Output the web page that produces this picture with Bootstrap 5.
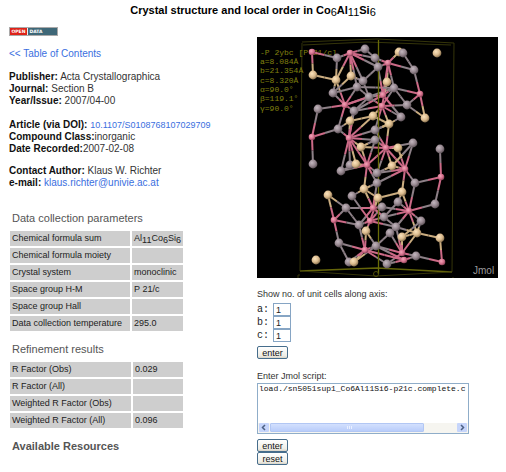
<!DOCTYPE html>
<html lang="en">
<head>
<meta charset="utf-8">
<meta name="viewport" content="width=device-width, initial-scale=1">
<title>Crystal structure and local order in Co6Al11Si6</title>
<link href="https://cdn.jsdelivr.net/npm/bootstrap@5.3.0/dist/css/bootstrap.min.css" rel="stylesheet">
<style>
body { font-family: "Liberation Sans", Arial, sans-serif; font-size: 10px; line-height: 12px; color: #333; background: #fff; }
.page { padding: 3px 8px 4px; }
.page-title { font-size: 11px; line-height: 14px; font-weight: 700; color: #000; margin: 0 0 10px; }
sub { font-size: 9px; bottom: 0; top: 2px; line-height: 0; }
.page-title sub { font-size: 11px; font-weight: 400; }
a { color: #3a6fe0; text-decoration: none; }
.info { padding-left: 1px; }
.meta p { margin: 0 0 12px; }
.meta p.dates { margin-bottom: 10px; }
.meta p.last { margin-bottom: 0; }
.meta strong { color: #111; }
.doi { font-size: 9px; }
.open-badge { display: block; }
.toc { margin: 12px 0 11px; }
.section-title { font-size: 11px; line-height: 14px; font-weight: 400; color: #555; margin: 9px 0 4px 3px; }
.section-title.first { margin-top: 22px; }
.props { border-collapse: separate; border-spacing: 2px; margin: 0 0 0 -1px; width: 177px; font-size: 9px; }
.props th, .props td { background: #cecece; height: 15px; line-height: 15px; padding: 0 2px; font-weight: 400; color: #222; white-space: nowrap; }
.props th { width: 121px; }
.model { padding: 10px 0 0 4px; }
.viewer { display: block; width: 100%; height: auto; background: #000; }
.field-label { display: block; font-size: 9px; line-height: 14px; color: #333; margin-top: 9px; }
.script-label { margin-top: 10px; }
.axis { margin: 2px 0 4px; }
.axis label { font: 10px/13px "Liberation Mono", monospace; color: #222; width: 16px; }
.axis input { width: 18px; height: 13px; padding: 0 2px; border: 1px solid #86a5c4; border-radius: 0; font-size: 9px; line-height: 11px; color: #222; }
.xp-btn { display: block; width: 31px; height: 13px; padding: 0; font-size: 9px; line-height: 10px; color: #111; border: 1px solid #466d8c; border-radius: 2px; background: linear-gradient(#fff, #eeede6 80%, #d8d3c7); }
.script-box { width: 88%; border: 1px solid #8fadc9; margin-bottom: 5px; }
.script-box textarea { display: block; width: 100%; height: 39px; padding: 0 1px; border: 0; border-radius: 0; resize: none; overflow: hidden; white-space: pre; font: 8px/10px "Liberation Mono", monospace; color: #111; background: #fff; }
.hbar { height: 10px; background: #f6f5f0; padding: 0 1px; }
.hbar .arrow { width: 10px; height: 9px; background: #c6d5fb; border-radius: 1px; }
.hbar .track { padding: 0 1px; }
.hbar .thumb { width: 83%; height: 9px; background: linear-gradient(#d3e0fe, #b9cdfa); border: 1px solid #b2c7f4; border-radius: 1px; }
.hbar svg { display: block; }
</style>
<script src="https://cdn.jsdelivr.net/npm/bootstrap@5.3.0/dist/js/bootstrap.bundle.min.js"></script>
</head>
<body>
<main class="page container-fluid">
  <h1 class="page-title text-center">Crystal structure and local order in Co<sub>6</sub>Al<sub>11</sub>Si<sub>6</sub></h1>
  <div class="row g-0">
    <section class="col-6 info">
      <svg class="open-badge" width="49" height="9" viewBox="0 0 49 9" role="img" aria-label="Open data">
        <rect width="49" height="9" fill="#aaa9a9"/>
        <rect x="1" y="1" width="47" height="7" fill="#eee"/>
        <rect x="1" y="1" width="17" height="7" fill="#dd2319"/>
        <rect x="19" y="1" width="29" height="7" fill="#3f6878"/>
        <text x="2.500" y="6" font-size="4.500" font-weight="700" fill="#fff" font-family="DejaVu Sans, sans-serif">OPEN</text>
        <text x="20.500" y="6" font-size="4.500" font-weight="700" fill="#fff" font-family="DejaVu Sans, sans-serif">DATA</text>
      </svg>
      <div class="toc"><a href="#">&lt;&lt; Table of Contents</a></div>
      <div class="meta">
        <p><strong>Publisher:</strong> Acta Crystallographica<br><strong>Journal:</strong> Section B<br><strong>Year/Issue:</strong> 2007/04-00</p>
        <p class="dates"><strong>Article (via DOI):</strong> <a class="doi" href="#">10.1107/S0108768107029709</a><br><strong>Compound Class:</strong>inorganic<br><strong>Date Recorded:</strong>2007-02-08</p>
        <p class="last"><strong>Contact Author:</strong> Klaus W. Richter<br><strong>e-mail:</strong> <a href="#">klaus.richter@univie.ac.at</a></p>
      </div>
      <h2 class="section-title first">Data collection parameters</h2>
      <table class="props">
        <tr><th scope="row">Chemical formula sum</th><td>Al<sub>11</sub>Co<sub>6</sub>Si<sub>6</sub></td></tr>
        <tr><th scope="row">Chemical formula moiety</th><td></td></tr>
        <tr><th scope="row">Crystal system</th><td>monoclinic</td></tr>
        <tr><th scope="row">Space group H-M</th><td>P 21/c</td></tr>
        <tr><th scope="row">Space group Hall</th><td></td></tr>
        <tr><th scope="row">Data collection temperature</th><td>295.0</td></tr>
      </table>
      <h2 class="section-title">Refinement results</h2>
      <table class="props">
        <tr><th scope="row">R Factor (Obs)</th><td>0.029</td></tr>
        <tr><th scope="row">R Factor (All)</th><td></td></tr>
        <tr><th scope="row">Weighted R Factor (Obs)</th><td></td></tr>
        <tr><th scope="row">Weighted R Factor (All)</th><td>0.096</td></tr>
      </table>
      <h2 class="section-title mb-0 fw-bold">Available Resources</h2>
    </section>
    <section class="col-6 model">
      <svg class="viewer" id="viewer" viewBox="0 0 241 241" role="img" aria-label="Jmol model of the unit cell">
        <defs>
          <radialGradient id="gG" cx=".38" cy=".35" r=".65"><stop offset="0" stop-color="#c3b7bf"/><stop offset=".6" stop-color="#95868e"/><stop offset="1" stop-color="#5f545a"/></radialGradient>
          <radialGradient id="gP" cx=".38" cy=".35" r=".65"><stop offset="0" stop-color="#f3a5b9"/><stop offset=".6" stop-color="#d4708c"/><stop offset="1" stop-color="#8c4459"/></radialGradient>
          <radialGradient id="gT" cx=".38" cy=".35" r=".65"><stop offset="0" stop-color="#fbe3bd"/><stop offset=".6" stop-color="#d9b98c"/><stop offset="1" stop-color="#8a7250"/></radialGradient>
        </defs>
        <g fill="none" stroke="#35350a" stroke-width="1"><path d="M45 5L120 2L197 6M45 6L44 105L43 234M197 6L196 120L195 235M46 8L110 5L194 8M41 241V238H43M196 241V240"/></g>
        <path d="M43 234L120 231L195 235" fill="none" stroke="#646409" stroke-width="1.5"/>
        <path d="M43 234L119 239L195 235" fill="none" stroke="#35350a"/>
        <g font-family="Liberation Mono, monospace" font-size="8" fill="#80800f">
          <text x="3" y="18">-P 2ybc [P 21/c]</text><text x="3" y="27">a=8.084Å</text><text x="3" y="36">b=21.354Å</text><text x="3" y="46">c=8.320Å</text><text x="3" y="55">α=90.0°</text><text x="3" y="64">β=119.1°</text><text x="3" y="74">γ=90.0°</text>
        </g>
        <g id="bonds"></g>
        <path d="M121.500 3V237" stroke="#696b07" stroke-width="1.300"/>
        <circle cx="119" cy="237" r="2.500" fill="none" stroke="#4e4e08"/>
        <g id="atoms"></g>
        <text x="216" y="237" font-family="Liberation Sans, sans-serif" font-size="10" fill="#9a9a9a">Jmol</text>
      </svg>
      <div class="field-label">Show no. of unit cells along axis:</div>
      <div class="axis">
        <div class="d-flex"><label for="ax">a:</label><input id="ax" type="text" value="1"></div>
        <div class="d-flex"><label for="bx">b:</label><input id="bx" type="text" value="1"></div>
        <div class="d-flex"><label for="cx">c:</label><input id="cx" type="text" value="1"></div>
      </div>
      <button class="xp-btn" type="button">enter</button>
      <label class="field-label script-label" for="script">Enter Jmol script:</label>
      <div class="script-box">
        <textarea id="script" wrap="off" spellcheck="false">load./sn5051sup1_Co6Al11Si6-p21c.complete.c</textarea>
        <div class="hbar d-flex">
          <div class="arrow"><svg width="10" height="9"><path d="M6 2L3.500 4.500L6 7" fill="none" stroke="#4d6185" stroke-width="1.500"/></svg></div>
          <div class="track flex-grow-1"><div class="thumb"><svg width="100%" height="7"><path d="M0 3.500H6" transform="translate(76 0)" stroke="#e9f0ff" stroke-width="3" stroke-dasharray="1 1"/></svg></div></div>
          <div class="arrow"><svg width="10" height="9"><path d="M4 2L6.500 4.500L4 7" fill="none" stroke="#4d6185" stroke-width="1.500"/></svg></div>
        </div>
      </div>
      <button class="xp-btn" type="button">enter</button>
      <button class="xp-btn" type="button">reset</button>
    </section>
  </div>
</main>
<script>
// Atoms: kind (G aluminium, P cobalt, T silicon), x, y
const atoms = {
  a:['P',55,15], b:['G',80,21], c:['P',93,16], d:['G',108,12], e:['G',118,21], f:['T',56,38], g:['T',79,43], h:['T',94,39],
  i:['G',106,44], j:['G',100,50], k:['G',76,56], l:['G',112,60], m:['P',88,68], n:['G',97,74], o:['G',61,72], p:['T',93,84],
  q:['T',116,79], r:['G',81,92], s:['P',55,100], t:['P',92,101], u:['T',104,110], v:['G',118,93], w:['G',118,103], x:['G',121,30],
  A:['T',142,15], B:['G',146,16], C:['P',131,26], D:['G',157,33], E:['T',180,16], F:['T',130,45], H:['G',137,51], I:['P',163,57],
  J:['P',126,58], K:['G',150,68], L:['P',125,69], M:['G',144,80], N:['T',168,81], O:['T',132,87], Q:['G',156,106], R:['P',129,111],
  S:['T',141,111], U:['G',183,112], V:['G',56,127], W:['G',84,134], X:['G',93,128], Y:['T',99,127], Z:['P',110,128],
  a1:['G',120,136], b1:['G',120,146], c1:['T',107,152], d1:['T',71,158], e1:['G',95,159], f1:['T',121,161], g1:['G',89,171],
  h1:['P',116,171], i1:['P',77,183], j1:['P',113,184], k1:['G',102,188], l1:['T',109,194], m1:['G',82,206], n1:['T',59,223],
  o1:['G',92,225], p1:['T',97,225], q1:['P',108,213], r1:['G',119,209], s1:['P',184,140], t1:['T',135,129], u1:['P',148,132],
  v1:['G',158,146], w1:['T',145,155], x1:['G',141,165], y1:['G',178,167], z1:['P',152,174], A1:['G',125,170], B1:['G',127,180],
  C1:['G',164,184], D1:['G',139,190], E1:['G',133,196], F1:['T',145,200], G1:['T',160,196], H1:['T',183,201], I1:['P',145,216],
  J1:['P',147,223], K1:['G',159,219], L1:['P',185,225], M1:['G',130,227]
};
const bonds = `a-b a-f b-c c-d c-e c-h c-i c-x d-e e-x f-g b-g g-c g-k g-m h-k h-i i-l i-x j-m j-l j-c k-m k-j m-n m-l m-r n-l n-p n-t n-J m-H
 o-m o-s s-r s-V r-t r-p p-t p-q q-L l-J l-L n-L t-v t-w t-u t-W t-X t-q t-n u-Z u-w v-O w-R v-R e-C A-C A-B B-D C-D C-F C-x C-H C-J D-I H-I K-I I-N
 K-N K-L K-H F-L F-J H-L H-J H-j L-M L-O L-v J-M x-J O-M O-R O-v O-q R-S R-Q R-w R-t1 R-a1 R-Z R-u1 R-u Q-u1 S-u1 Q-t1 U-s1
 Z-W Z-X Z-Y Z-a1 Z-b1 Z-c1 Z-w t-Z t-Y W-Y u1-t1 u1-a1 u1-b1 u1-v1 u1-w1 t1-a1 c1-b1 c1-h1 c1-e1 c1-f1 v1-s1 v1-z1 s1-y1 y1-z1 z1-w1 z1-x1
 z1-A1 z1-B1 z1-C1 z1-D1 z1-G1 w1-f1 w1-x1 f1-h1 h1-g1 h1-A1 h1-B1 h1-k1 h1-b1 e1-j1 d1-g1 d1-i1 g1-i1 g1-k1 i1-k1 i1-m1 j1-k1 j1-l1 j1-D1
 j1-A1 j1-f1 j1-B1 k1-q1 l1-q1 q1-m1 q1-r1 q1-p1 q1-o1 m1-o1 r1-p1 r1-E1 r1-I1 r1-l1 q1-M1 B1-x1 D1-I1 D1-G1 E1-I1 E1-D1 F1-I1 F1-G1 G1-I1
 G1-H1 G1-C1 C1-F1 H1-L1 K1-L1 K1-J1 K1-I1 M1-I1 M1-J1 r1-J1 q1-J1 D1-h1`.trim().split(/\s+/);
const tone = { G:'#8d8087', P:'#cc6a87', T:'#cbad80' }, size = { G:4.4, P:3.3, T:4.4 };
const line = (p, q, k) => `<path d="M${p}L${q}" stroke="${tone[k]}" stroke-width="2"/>`;
document.getElementById('bonds').innerHTML = bonds.map(s => {
  const [a, b] = s.split('-').map(k => atoms[k]);
  const mid = [(a[1] + b[1]) / 2, (a[2] + b[2]) / 2];
  return line([a[1], a[2]], mid, a[0]) + line(mid, [b[1], b[2]], b[0]);
}).join('');
document.getElementById('atoms').innerHTML = Object.values(atoms).map(([k, x, y]) => `<circle cx="${x}" cy="${y}" r="${size[k]}" fill="url(#g${k})"/>`).join('');
</script>
</body>
</html>
